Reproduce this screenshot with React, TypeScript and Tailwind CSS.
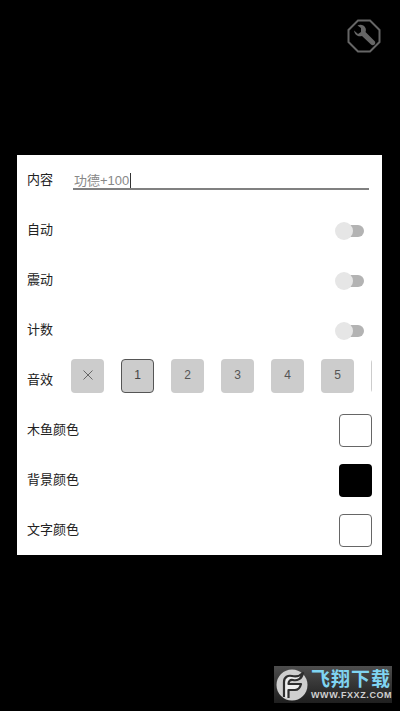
const cjk = 'font-["Liberation_Sans","Noto_Sans_CJK_SC",sans-serif]';

const sounds = ['x', '1', '2', '3', '4', '5', ''];

function Label({ text }: { text: string }) {
  return <span className="mb-[1px] text-[13px] leading-none text-[#222]">{text}</span>;
}

function SwitchRow({ label }: { label: string }) {
  return (
    <div className="flex h-[50px] items-center justify-between pl-[10px] pr-[18px]">
      <Label text={label} />
      <div className="mt-[2px] flex w-[29px] items-center">
        <div className="z-10 h-[18px] w-[18px] shrink-0 rounded-full bg-[#e6e6e6]" />
        <div className="-ml-[8px] h-[12px] w-[19px] rounded-full bg-[#b3b3b3]" />
      </div>
    </div>
  );
}

function ColorRow({ label, dark }: { label: string; dark?: boolean }) {
  return (
    <div className="flex h-[50px] items-center justify-between pl-[10px] pr-[10px]">
      <Label text={label} />
      <div className={dark ? 'h-[33px] w-[33px] rounded-[4px] bg-black' : 'h-[33px] w-[33px] rounded-[4px] border-[1.5px] border-[#666] bg-white'} />
    </div>
  );
}

function WrenchIcon() {
  return (
    <svg width="34" height="34" viewBox="0 0 34 34" fill="none">
      <path d="M11 1.5H23L32.5 11V23L23 32.5H11L1.500 23V11Z" stroke="#666" strokeWidth="2" />
      <path d="M7 11.500 L11 15 L14 13 L14 9 L10.500 6.500 C13 5 17 5.500 18.500 9 C19 10.500 19 12 18.500 13 L27.500 22 C28.500 23 28.500 24.500 27.500 25.500 C26.500 26.500 25 26.500 24 25.500 L15 17 C12 18 8 17 7 11.500Z" fill="#666" />
    </svg>
  );
}

export default function App() {
  return (
    <div className={`relative flex h-[711px] w-[400px] flex-col overflow-hidden bg-black ${cjk}`}>
      <div className="flex h-[155px] justify-end pr-[19px] pt-[19px]">
        <WrenchIcon />
      </div>

      <div className="ml-[17px] w-[365px] bg-white">
        <div className="flex h-[50px] items-center pl-[10px] pr-[13px]">
          <Label text="内容" />
          <div className="ml-[20px] flex h-[20px] flex-1 items-center border-b-2 border-[#808080] pl-[1px] pt-[3px]">
            <span className="text-[13px] leading-none text-[#888]">功德+100</span>
            <span className="ml-[1px] h-[15px] w-[1px] bg-[#333]" />
          </div>
        </div>

        <SwitchRow label="自动" />
        <SwitchRow label="震动" />
        <SwitchRow label="计数" />

        <div className="flex h-[50px] items-center pl-[10px]">
          <Label text="音效" />
          <div className="mb-[8px] ml-[18px] flex w-[301px] gap-[17px] overflow-hidden">
            {sounds.map((s, i) => (
              <div
                key={i}
                className={
                  i === 1
                    ? 'flex h-[34px] w-[33px] shrink-0 items-center justify-center rounded-[4px] border border-[#555] bg-[#ccc] pb-[2px] text-[12px] text-[#444]'
                    : 'flex h-[34px] w-[33px] shrink-0 items-center justify-center rounded-[4px] bg-[#ccc] pb-[2px] text-[12px] text-[#555]'
                }
              >
                {s === 'x' ? (
                  <svg width="10" height="10" viewBox="0 0 10 10" stroke="#666" strokeWidth="1">
                    <path d="M0.500 0.500L9.500 9.500M9.500 0.500L0.500 9.500" />
                  </svg>
                ) : (
                  s
                )}
              </div>
            ))}
          </div>
        </div>

        <ColorRow label="木鱼颜色" />
        <ColorRow label="背景颜色" dark />
        <ColorRow label="文字颜色" />
      </div>

      <div className="absolute left-[274px] top-[666px] flex h-[37px] w-[118px] items-center gap-[3px] overflow-hidden bg-gradient-to-b from-[#4d4d4d] to-[#1f1f1f] px-[2px]">
        <svg width="32" height="32" viewBox="0 0 32 32" className="shrink-0">
          <circle cx="16" cy="16" r="15.500" fill="#cfcfcf" />
          <path d="M8 28V13C8 8 12 6 16 7C20 8 24 7 27 4C26 10 21 12 17 11C14 10.500 12.500 12 12.500 15H25C24 19 22 21 19 21H12.500V29" fill="#eee" stroke="#2e2e2e" strokeWidth="2.200" strokeLinejoin="round" />
        </svg>
        <div className="flex shrink-0 flex-col items-start whitespace-nowrap">
          <span className="text-[19px] font-bold leading-[21px] tracking-[1px] text-[#7fd4f2]">飞翔下载</span>
          <span className="text-[9px] font-bold leading-[10px] tracking-[0.6px] text-[#d0d0d0]">WWW.FXXZ.COM</span>
        </div>
      </div>
    </div>
  );
}
